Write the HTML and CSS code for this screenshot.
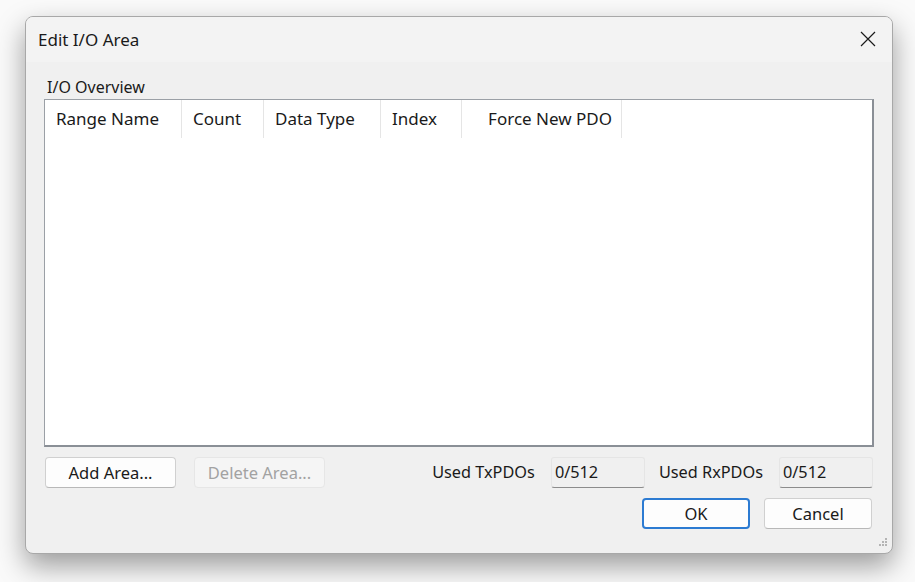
FILE: index.html
```html
<!DOCTYPE html>
<html>
	<head>
		<title>Edit I/O Area</title>
		<link rel="stylesheet" href="styles.css">
	</head>
	<body>
		<div class="dialog">
			<div class="titleBar">
				<span class="title">Edit I/O Area</span>
				<svg class="closeIcon" width="16" height="16" viewBox="0 0 16 16">
					<path d="M1 1 L15 15 M15 1 L1 15" stroke="#1a1a1a" stroke-width="1.2" fill="none"/>
				</svg>
			</div>
			<div class="content">
				<div class="groupLabel">I/O Overview</div>
				<div class="listView">
					<div class="listHeader">
						<span class="col colName">Range Name</span>
						<span class="col colCount">Count</span>
						<span class="col colType">Data Type</span>
						<span class="col colIndex">Index</span>
						<span class="col colForce">Force New PDO</span>
					</div>
				</div>
				<div class="areaRow">
					<button class="btn btnArea">Add Area...</button>
					<button class="btn btnArea" disabled>Delete Area...</button>
					<span class="spacer"></span>
					<label class="fieldLabel">Used TxPDOs</label>
					<span class="readField">0/512</span>
					<label class="fieldLabel">Used RxPDOs</label>
					<span class="readField">0/512</span>
				</div>
				<div class="actionRow">
					<button class="btn btnAction btnDefault">OK</button>
					<button class="btn btnAction">Cancel</button>
				</div>
				<div class="grip">
					<svg width="12" height="12" viewBox="0 0 12 12">
						<g fill="#b4b4b4">
							<rect x="8" y="0" width="2" height="2"/>
							<rect x="5" y="3" width="2" height="2"/>
							<rect x="8" y="3" width="2" height="2"/>
							<rect x="2" y="6" width="2" height="2"/>
							<rect x="5" y="6" width="2" height="2"/>
							<rect x="8" y="6" width="2" height="2"/>
						</g>
					</svg>
				</div>
			</div>
		</div>
	</body>
</html>
```
FILE: styles.css
```css
html, body {
	margin: 0;
	padding: 0;
	height: 100%;
	background-color: #fafafa;
	font-family: "Noto Sans", "Open Sans", sans-serif;
	color: #1a1a1a;
}

body {
	padding-top: 16px;
	box-sizing: border-box;
}

.dialog {
	margin-left: 25px;
	width: 866px;
	height: 536px;
	border: 1px solid #a8a8a8;
	border-radius: 8px;
	background-color: #f0f0f0;
	box-shadow: 0 12px 28px rgba(0, 0, 0, 0.38);
	display: flex;
	flex-direction: column;
	overflow: hidden;
}

.titleBar {
	height: 45px;
	background-color: #f3f3f3;
	display: flex;
	align-items: center;
	padding: 0 16px 0 12px;
	flex-shrink: 0;
}

.title {
	font-size: 17px;
	flex: 1;
	margin-top: -1px;
}

.closeIcon {
	margin-top: -1px;
}

.content {
	position: relative;
	flex: 1;
	padding: 0 17px 0 18px;
	display: flex;
	flex-direction: column;
}

.groupLabel {
	font-size: 16px;
	margin: 14px 0 0 3px;
	height: 23px;
	line-height: 22px;
}

.listView {
	height: 345px;
	margin-right: 1px;
	background-color: #ffffff;
	border-style: solid;
	border-width: 1px 2px 2px 1px;
	border-color: #9ba0a6 #8a8f96 #8a8f96 #9ba0a6;
}

.listHeader {
	display: flex;
	height: 38px;
}

.col {
	font-size: 17px;
	line-height: 38px;
	padding-left: 11px;
	border-right: 1px solid #e5e5e5;
	box-sizing: border-box;
	white-space: nowrap;
}

.colName { width: 137px; }
.colCount { width: 82px; }
.colType { width: 117px; }
.colIndex { width: 81px; }
.colForce { width: 160px; text-align: right; padding-right: 9px; }

.areaRow {
	display: flex;
	align-items: center;
	margin-top: 9px;
	height: 32px;
	margin-left: 1px;
	padding-right: 2px;
}

.btn {
	font-family: inherit;
	font-size: 16.5px;
	color: #1a1a1a;
	background-color: #fdfdfd;
	border: 1px solid #d0d0d0;
	border-bottom-color: #b8b8b8;
	border-radius: 4px;
	padding: 0;
	height: 31px;
	box-sizing: border-box;
}

.btn:disabled {
	color: #a2a2a2;
	background-color: #f5f5f5;
	border-color: #e6e6e6;
}

.btnArea {
	width: 131px;
	margin-right: 18px;
}

.spacer {
	flex: 1;
}

.fieldLabel {
	font-size: 16.3px;
	margin-right: 16px;
}

.readField {
	width: 94px;
	height: 31px;
	box-sizing: border-box;
	font-size: 16.3px;
	line-height: 29px;
	padding-left: 3px;
	background-color: #f0f0f0;
	border: 1px solid #e5e5e5;
	border-bottom: 1px solid #8c8c8c;
	border-radius: 3px;
	margin-right: 14px;
}

.readField:last-child {
	margin-right: 0;
}

.actionRow {
	display: flex;
	justify-content: flex-end;
	gap: 14px;
	margin-top: 10px;
	padding-right: 3px;
}

.btnAction {
	width: 108px;
	height: 31px;
}

.btnDefault {
	border: 2px solid #2c7bd2;
}

.grip {
	position: absolute;
	right: 3px;
	bottom: 3px;
	line-height: 0;
}
```
